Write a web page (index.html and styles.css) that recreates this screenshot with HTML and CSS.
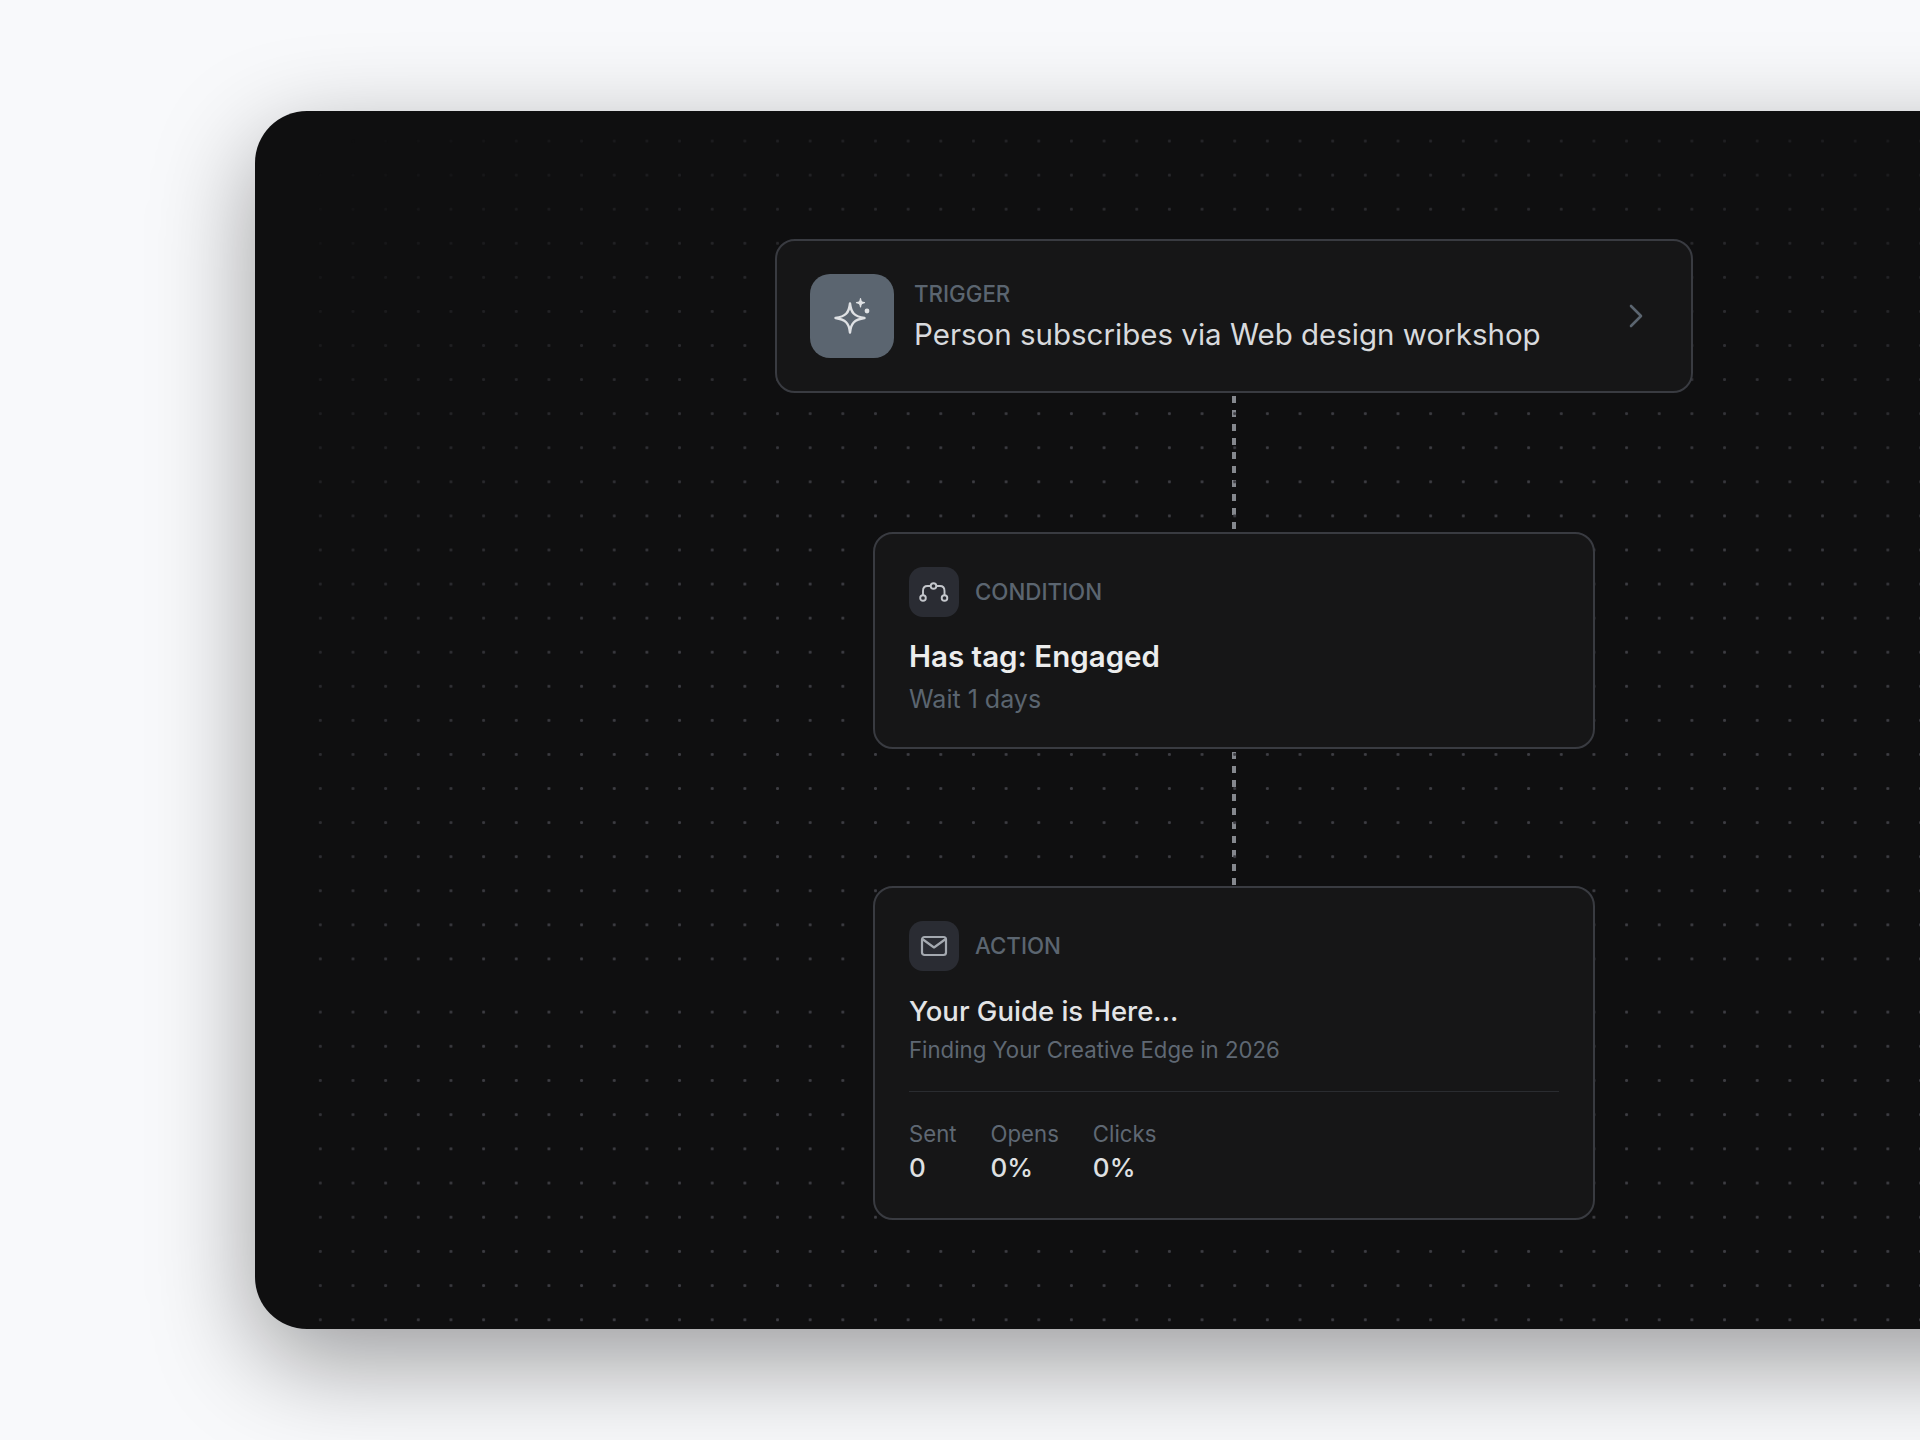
FILE: index.html
```html
<!DOCTYPE html>
<html lang="en">
<head>
    <meta charset="UTF-8">
    <meta name="viewport" content="width=device-width, initial-scale=1.0">
    <title>Automation flow</title>
    <link rel="stylesheet" href="styles.css">
</head>
<body>
    <!-- Dark canvas with the workflow, runs off the right side of the window -->
    <div class="canvas">
        <div class="dots">
            <div class="dots-top"></div>
            <div class="dots-bottom"></div>
        </div>

        <!-- Trigger -->
        <div class="card trigger">
            <div class="trigger-icon">
                <svg width="44" height="44" viewBox="0 0 44 44" fill="none" stroke="#dfe1e4" stroke-width="2.400" stroke-linejoin="round">
                    <path d="M20 9.500 C21 19 24.500 22.500 34.500 24 C24.500 25.500 21 29 20 38.500 C19 29 15.500 25.500 5.500 24 C15.500 22.500 19 19 20 9.500 Z"/>
                    <path d="M30.500 4.500 C30.900 7.500 31.500 8.200 34.500 8.700 C31.500 9.200 30.900 10 30.500 13 C30.100 10 29.500 9.200 26.500 8.700 C29.500 8.200 30.100 7.500 30.500 4.500 Z" stroke-width="1.200" fill="#dfe1e4"/>
                    <circle cx="37" cy="17" r="2.400" fill="#dfe1e4" stroke="none"/>
                </svg>
            </div>
            <div class="trigger-text">
                <div class="label">TRIGGER</div>
                <div class="trigger-title">Person subscribes via Web design workshop</div>
            </div>
            <svg class="chevron" width="14" height="24" viewBox="0 0 14 24" fill="none" stroke="#5b6570" stroke-width="2.600" stroke-linecap="round" stroke-linejoin="round">
                <path d="M2 2 L12 12 L2 22"/>
            </svg>
        </div>

        <div class="connector"></div>

        <!-- Condition -->
        <div class="card step step-condition">
            <div class="step-head">
                <div class="step-icon">
                    <svg width="30" height="30" viewBox="0 0 30 30" fill="none" stroke="#c4c7cc" stroke-width="1.900">
                        <circle cx="14.500" cy="9" r="2.800"/>
                        <circle cx="4" cy="21" r="2.800"/>
                        <circle cx="25.500" cy="21" r="2.800"/>
                        <path d="M11.700 9 H8.500 C5.500 9 4 11 4 14 V18.200"/>
                        <path d="M17.300 9 H21 C24 9 25.500 11 25.500 14 V18.200"/>
                    </svg>
                </div>
                <div class="label">CONDITION</div>
            </div>
            <div class="cond-title">Has tag: Engaged</div>
            <div class="cond-sub">Wait 1 days</div>
        </div>

        <div class="connector connector-short"></div>

        <!-- Action -->
        <div class="card step step-action">
            <div class="step-head">
                <div class="step-icon">
                    <svg width="30" height="30" viewBox="0 0 30 30" fill="none" stroke="#a4a9b0" stroke-width="2.200" stroke-linejoin="round" stroke-linecap="round">
                        <rect x="3" y="6" width="24" height="18" rx="2.500"/>
                        <path d="M4 8.500 L15 16.500 L26 8.500"/>
                    </svg>
                </div>
                <div class="label">ACTION</div>
            </div>
            <div class="action-title">Your Guide is Here...</div>
            <div class="action-sub">Finding Your Creative Edge in 2026</div>
            <div class="stats">
                <div>
                    <div class="stat-name">Sent</div>
                    <div class="stat-value">0</div>
                </div>
                <div>
                    <div class="stat-name">Opens</div>
                    <div class="stat-value">0%</div>
                </div>
                <div>
                    <div class="stat-name">Clicks</div>
                    <div class="stat-value">0%</div>
                </div>
            </div>
        </div>
    </div>
</body>
</html>
```

FILE: styles.css
```css
html, body {
    height: 100%;
}

body {
    margin: 0;
    overflow: hidden;
    background-color: #f8f9fb;
    font-family: Inter, "Liberation Sans", sans-serif;
}

/* Dark canvas */
.canvas {
    position: relative;
    box-sizing: border-box;
    width: 1958px;
    height: 1218px;
    margin: 111px 0 0 255px;
    padding-top: 128px;
    display: flex;
    flex-direction: column;
    align-items: center;
    background-color: #0f0f10;
    border-radius: 52px;
    box-shadow: 0 32px 100px rgba(0, 0, 0, 0.38);
}

/* Dot grid, fades out towards the top left */
.dots {
    position: absolute;
    inset: 0;
    overflow: hidden;
    border-radius: 52px;
    -webkit-mask-image: radial-gradient(ellipse 1300px 1150px at 1000px 1000px, #000 60%, transparent 110%);
    mask-image: radial-gradient(ellipse 1300px 1150px at 1000px 1000px, #000 60%, transparent 110%);
}

.dots-top,
.dots-bottom {
    position: absolute;
    left: 49px;
    right: 0;
    background-image: radial-gradient(circle, #3d3d43 1.200px, transparent 1.800px);
}

.dots-top {
    top: 0;
    height: 860px;
    background-size: 32.670px 34.080px;
    background-position: 0 13px;
}

.dots-bottom {
    top: 889px;
    bottom: 0;
    background-size: 32.670px 34.200px;
    background-position: 0 -5px;
}

/* Cards */
.card {
    position: relative;
    box-sizing: border-box;
    background-color: #161617;
    border: 2px solid #393b41;
    border-radius: 20px;
}

.trigger {
    width: 918px;
    height: 154px;
    padding: 2px 48px 0 33px;
    display: flex;
    align-items: center;
    gap: 20px;
}

.trigger-icon {
    width: 84px;
    height: 84px;
    margin-top: -2px;
    flex-shrink: 0;
    display: flex;
    align-items: center;
    justify-content: center;
    background-color: #5b6570;
    border-radius: 20px;
}

.trigger-text {
    flex: 1;
}

.trigger-title {
    margin-top: 6px;
    font-size: 29.500px;
    line-height: 40px;
    color: #d8dadd;
}

.label {
    font-size: 22.300px;
    line-height: 28px;
    font-weight: 500;
    color: #5b6570;
}

.chevron {
    margin-top: -2px;
    flex-shrink: 0;
}

/* Dashed line between the cards */
.connector {
    width: 4px;
    height: 139px;
    background-image: repeating-linear-gradient(to bottom, transparent 0, transparent 3px, #85888e 3px, #85888e 10px, transparent 10px, transparent 14px);
}

.connector-short {
    height: 137px;
}

.step {
    width: 722px;
    padding: 33px 34px 28px;
}

.step-action {
    padding-bottom: 33px;
}

.step-head {
    display: flex;
    align-items: center;
    gap: 16px;
}

.step-icon {
    width: 50px;
    height: 50px;
    display: flex;
    align-items: center;
    justify-content: center;
    background-color: #2a2c33;
    border-radius: 14px;
}

.cond-title {
    margin-top: 19px;
    font-size: 29.500px;
    line-height: 40px;
    font-weight: 600;
    color: #eceded;
}

.cond-sub {
    margin-top: 3px;
    font-size: 25px;
    line-height: 40px;
    color: #5b6570;
}

.action-title {
    margin-top: 21px;
    font-size: 27.500px;
    line-height: 38px;
    font-weight: 500;
    color: #e3e4e6;
}

.action-sub {
    margin-top: 1px;
    font-size: 22.200px;
    line-height: 38px;
    color: #5f6873;
}

.stats {
    margin-top: 22px;
    padding-top: 27px;
    border-top: 1px solid #2a2c30;
    display: flex;
    gap: 34px;
}

.stat-name {
    font-size: 22.200px;
    line-height: 30px;
    color: #5f6873;
}

.stat-value {
    margin-top: 2px;
    font-size: 26px;
    line-height: 34px;
    font-weight: 500;
    color: #dfe0e2;
}
```
